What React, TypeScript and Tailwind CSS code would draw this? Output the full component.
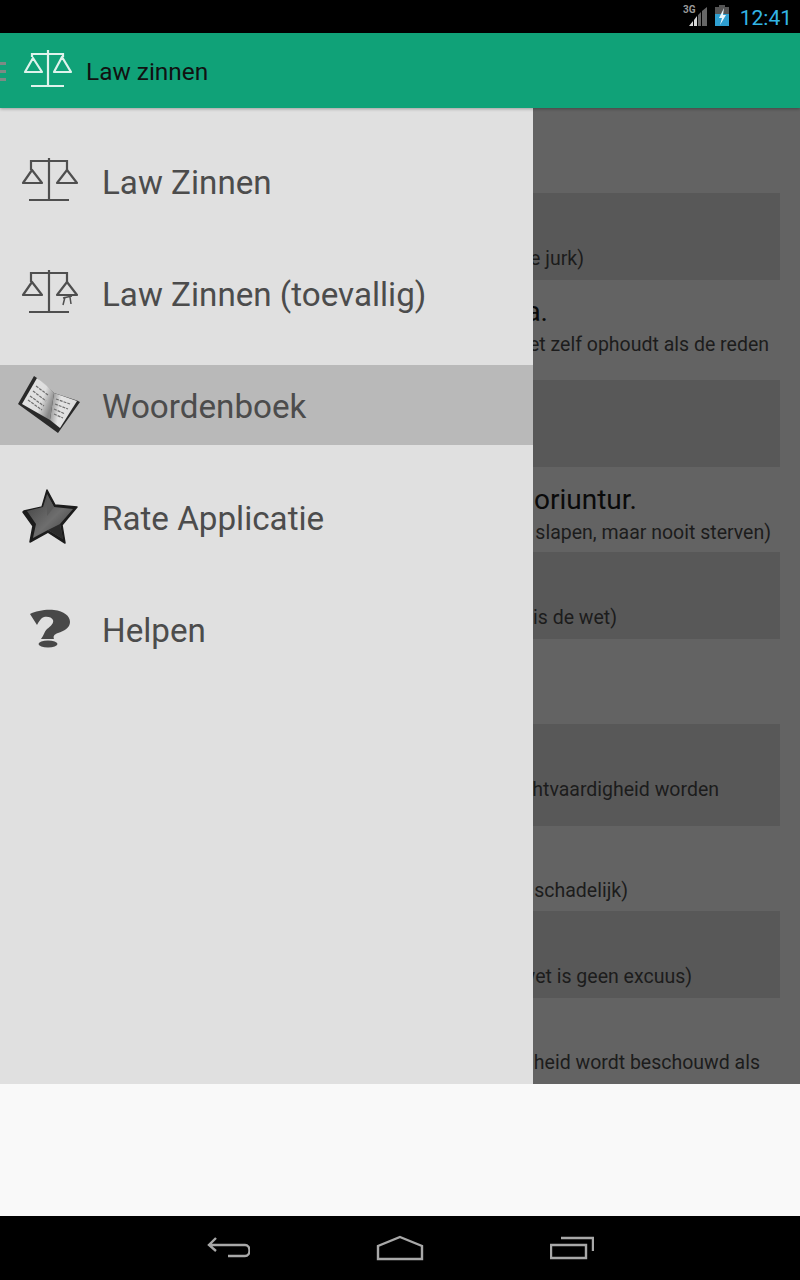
import React from "react";

const font = "font-['Roboto',sans-serif]";

const menuItems = [
  { label: "Law Zinnen", icon: "scale", selected: false },
  { label: "Law Zinnen (toevallig)", icon: "scaleRandom", selected: false },
  { label: "Woordenboek", icon: "book", selected: true },
  { label: "Rate Applicatie", icon: "star", selected: false },
  { label: "Helpen", icon: "help", selected: false },
];

const phrases = [
  { height: "h-[85px]", band: false, pad: "pb-[9px]", heading: "", headingPr: "", text: "", textPr: "" },
  { height: "h-[87px]", band: true, pad: "pb-[9px]", heading: "", headingPr: "", text: "de jurk)", textPr: "pr-[196px]" },
  { height: "h-[100px]", band: false, pad: "pb-[23px]", heading: "a.", headingPr: "pr-[232px]", text: "het zelf ophoudt als de reden", textPr: "pr-[11px]" },
  { height: "h-[87px]", band: true, pad: "pb-[9px]", heading: "", headingPr: "", text: "", textPr: "" },
  { height: "h-[85px]", band: false, pad: "pb-[7px]", heading: "oriuntur.", headingPr: "pr-[143px]", text: "slapen, maar nooit sterven)", textPr: "pr-[9px]" },
  { height: "h-[87px]", band: true, pad: "pb-[9px]", heading: "", headingPr: "", text: "is de wet)", textPr: "pr-[163px]" },
  { height: "h-[85px]", band: false, pad: "pb-[9px]", heading: "", headingPr: "", text: "", textPr: "" },
  { height: "h-[102px]", band: true, pad: "pb-[24px]", heading: "", headingPr: "", text: "chtvaardigheid worden", textPr: "pr-[61px]" },
  { height: "h-[85px]", band: false, pad: "pb-[8px]", heading: "", headingPr: "", text: "schadelijk)", textPr: "pr-[152px]" },
  { height: "h-[87px]", band: true, pad: "pb-[9px]", heading: "", headingPr: "", text: "wet is geen excuus)", textPr: "pr-[88px]" },
  { height: "h-[86px]", band: false, pad: "pb-[9px]", heading: "", headingPr: "", text: "heid wordt beschouwd als", textPr: "pr-[20px]" },
];

const ScalePaths = ({ color }: { color: string }) => (
  <g stroke={color} strokeWidth="2.2" fill="none">
    <path d="M49 17v42M29 59h40M31 29v-9h36v9" />
    <path d="M32 29l-9 13h19zM67 29l-10 13h20z" strokeLinejoin="round" />
  </g>
);

const MenuIcon = ({ name }: { name: string }) => {
  if (name === "scale")
    return (
      <svg className="h-[80px] w-[102px] shrink-0" viewBox="0 0 102 80">
        <ScalePaths color="#4f4f4f" />
      </svg>
    );
  if (name === "scaleRandom")
    return (
      <svg className="h-[80px] w-[102px] shrink-0" viewBox="0 0 102 80">
        <ScalePaths color="#4f4f4f" />
        <path d="M63 45l9-2M65 44l-2 8M70 44l1 7" stroke="#4f4f4f" strokeWidth="1.5" fill="none" />
      </svg>
    );
  if (name === "book")
    return (
      <svg className="h-[80px] w-[102px] shrink-0" viewBox="0 0 102 80">
        <defs>
          <linearGradient id="pageLeft" x1="0" y1="0" x2="1" y2="0.5">
            <stop offset="0" stopColor="#e4e4e4" />
            <stop offset="0.7" stopColor="#dedede" />
            <stop offset="1" stopColor="#8a8a8a" />
          </linearGradient>
          <linearGradient id="pageRight" x1="0" y1="0.4" x2="1" y2="0.6">
            <stop offset="0" stopColor="#8f8f8f" />
            <stop offset="0.35" stopColor="#e4e4e4" />
            <stop offset="1" stopColor="#dcdcdc" />
          </linearGradient>
        </defs>
        <path d="M34 11L18 39l40 29 22-31-3-1.5L54 28 37 13z" fill="#2a2a2a" />
        <path d="M37 13L22 39l28 16 4-27C48 22 43 17 37 13z" fill="url(#pageLeft)" />
        <path d="M54 28l-4 27 10 8 17-27z" fill="url(#pageRight)" />
        <path
          d="M36 21l12 9M33 26l13 10M30 31l14 10M28 35l14 10M56 34l14 5M55 39l13 5M54 44l11 5M54 49l9 4"
          stroke="#6f6f6f"
          strokeWidth="1.2"
          strokeDasharray="3 1"
          fill="none"
        />
      </svg>
    );
  if (name === "star")
    return (
      <svg className="h-[80px] w-[102px] shrink-0" viewBox="0 0 102 80">
        <defs>
          <linearGradient id="starFill" x1="0" y1="0" x2="1" y2="1">
            <stop offset="0" stopColor="#3d3d3d" />
            <stop offset="0.55" stopColor="#6e6e6e" />
            <stop offset="1" stopColor="#3a3a3a" />
          </linearGradient>
        </defs>
        <path
          d="M47 13l8 15 22 2-15 18 3 18-17-11-18 10 3-16-10-14 1-1 18-4z"
          fill="#1c1c1c"
          stroke="#1c1c1c"
          strokeWidth="1.5"
          strokeLinejoin="round"
        />
        <path d="M47 17l7 13 19 2-13 15 3 15-15-9-15 8 3-14-9-13 16-4z" fill="url(#starFill)" />
        <path d="M47 17l7 13-7 9z" fill="#5a5a5a" />
        <path d="M60 47l3 15-15-9z" fill="#2c2c2c" />
      </svg>
    );
  return (
    <svg className="h-[80px] w-[102px] shrink-0" viewBox="0 0 102 80">
      <path
        d="M30 25C36 22 46 20 54 21C64 22 70 27 70 33C70 39 64 42 58 44C54 45.500 53 47 54 50H41C44 46 44 43 47 40C51 37 54 34 53 31C52 28 47 27 44 28C41 29 39 32 37 36Z"
        fill="#484848"
      />
      <ellipse cx="48" cy="55" rx="9.500" ry="3.500" fill="#484848" />
    </svg>
  );
};

export default function App() {
  return (
    <div className={`${font} flex h-[1280px] w-[800px] flex-col overflow-hidden bg-[#f9f9f9]`}>
      {/* status bar */}
      <div className="flex h-[33px] items-center justify-end bg-black pr-[8px]">
        <svg className="mr-[9px] h-[33px] w-[60px]" viewBox="0 0 60 33">
          <text x="12" y="13" fill="#9a9a9a" fontSize="10" fontWeight="700" fontFamily="Roboto, sans-serif">
            3G
          </text>
          <path d="M18 26l4-5v5zM23 26v-6l3-4v10z" fill="#d8d8d8" />
          <path d="M27 26V15l3-3v14zM31 26V11l5-4v19z" fill="#666" />
          <path d="M44 7h4V5h6v2h4v19H44z" fill="#555" />
          <path d="M44 14h14v12H44z" fill="#2f9fd0" />
          <path d="M53 8l-5 10h3l-2 7 6-10h-3z" fill="#eaf7fc" />
        </svg>
        <span className="pt-[3px] text-[21px] leading-[33px] text-[#33b5e5]">12:41</span>
      </div>

      {/* action bar */}
      <div className="relative z-10 flex h-[75px] items-center bg-[#10a278] shadow-[0_1px_3px_rgba(0,0,0,0.3)]">
        <div className="mt-[2px] flex w-[6px] flex-col gap-[5px]">
          <div className="h-[3px] bg-[#7d8a85]" />
          <div className="h-[3px] bg-[#7d8a85]" />
          <div className="h-[3px] bg-[#7d8a85]" />
        </div>
        <svg className="mb-[3px] ml-[17px] h-[40px] w-[50px]" viewBox="0 0 50 40">
          <g stroke="#dff3ec" strokeWidth="2.2" fill="none">
            <path d="M25 1v36M8 37h33M9 8V5h31v3" />
            <path d="M10 9l-8 14h17zM39 8l-8 15h17z" strokeLinejoin="round" />
          </g>
        </svg>
        <span className="ml-[13px] pt-[4px] text-[24.4px] text-[#111]">Law zinnen</span>
      </div>

      {/* drawer and dimmed content */}
      <div className="flex h-[976px]">
        <div className="flex w-[533px] shrink-0 flex-col gap-[32px] bg-[#e0e0e0] pt-[33px]">
          {menuItems.map((item) => (
            <div
              key={item.label}
              className={item.selected ? "flex h-[80px] items-center bg-[#b9b9b9]" : "flex h-[80px] items-center"}
            >
              <MenuIcon name={item.icon} />
              <span className="pt-[4px] text-[33.2px] leading-[40px] text-[#4c4c4c]">{item.label}</span>
            </div>
          ))}
        </div>
        <div className="flex-1 overflow-hidden bg-[#636363] pr-[20px]">
          {phrases.map((row, index) => (
            <div
              key={index}
              className={`flex flex-col justify-end ${row.height} ${row.pad} ${row.band ? "bg-[#585858]" : ""}`}
            >
              {row.heading && (
                <div className={`mb-[5px] flex justify-end whitespace-nowrap text-[28px] leading-[32px] text-[#0a0a0a] ${row.headingPr}`}>
                  {row.heading}
                </div>
              )}
              {row.text && (
                <div className={`flex justify-end whitespace-nowrap text-[19.5px] leading-[24px] text-[#1c1c1c] ${row.textPr}`}>
                  {row.text}
                </div>
              )}
            </div>
          ))}
        </div>
      </div>

      <div className="h-[132px] bg-[#f9f9f9]" />

      {/* navigation bar */}
      <div className="flex h-[64px] items-center justify-center gap-[126px] bg-black">
        <svg className="h-[24px] w-[44px]" viewBox="0 0 44 24">
          <path d="M10 2L3 9l7 6M3 9h36c6 0 6 11 0 11H22" stroke="#a8a8a8" strokeWidth="2.4" fill="none" />
        </svg>
        <svg className="h-[26px] w-[48px]" viewBox="0 0 48 26">
          <path d="M24 2l22 9v13H2V11z" stroke="#a8a8a8" strokeWidth="2.4" fill="none" />
        </svg>
        <svg className="h-[24px] w-[44px]" viewBox="0 0 44 24">
          <path d="M1 9h35v13H1zM11 2h32v13" stroke="#a8a8a8" strokeWidth="2.4" fill="none" />
        </svg>
      </div>
    </div>
  );
}
